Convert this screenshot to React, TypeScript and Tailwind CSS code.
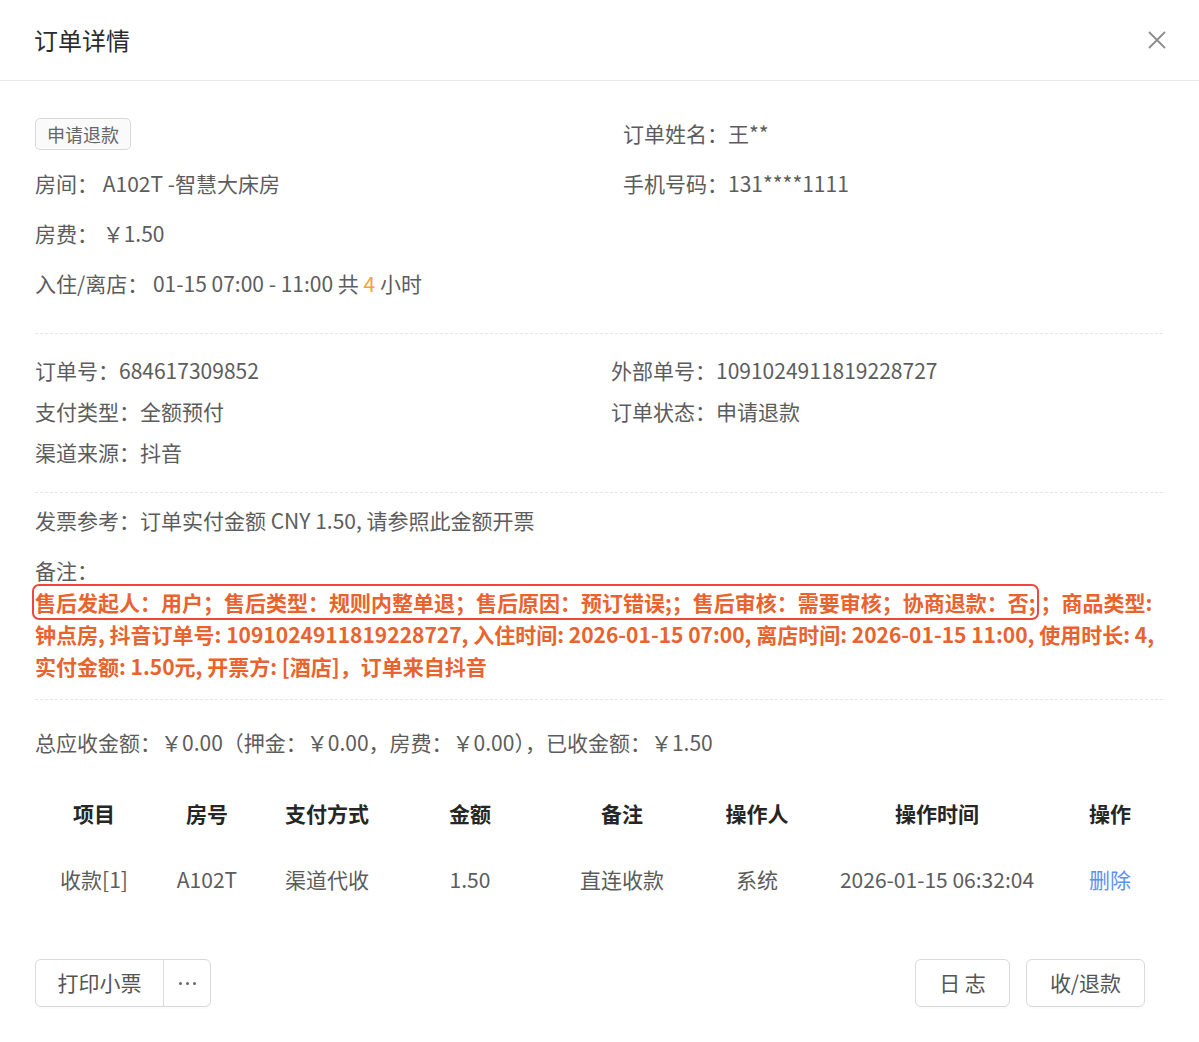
import React from "react"

const font = { fontFamily: '"Noto Sans CJK SC", "Noto Sans", sans-serif' }

const columns = [
  { key: "item", title: "项目" },
  { key: "room", title: "房号" },
  { key: "pay", title: "支付方式" },
  { key: "amount", title: "金额" },
  { key: "note", title: "备注" },
  { key: "operator", title: "操作人" },
  { key: "time", title: "操作时间" },
  { key: "action", title: "操作" },
]

const rows = [
  {
    item: "收款[1]",
    room: "A102T",
    pay: "渠道代收",
    amount: "1.50",
    note: "直连收款",
    operator: "系统",
    time: "2026-01-15 06:32:04",
  },
]

function Divider() {
  return <div className="h-0 border-t border-dashed border-[#e6e6e6]" />
}

function CloseIcon() {
  return (
    <svg width="20" height="20" viewBox="0 0 20 20" fill="none" stroke="#8c8c8c" strokeWidth="1.8">
      <path d="M2 2L18 18M18 2L2 18" />
    </svg>
  )
}

function MoreDots() {
  return (
    <span className="flex items-center gap-[4px]">
      <span className="h-[3px] w-[3px] rounded-full bg-[#666]" />
      <span className="h-[3px] w-[3px] rounded-full bg-[#666]" />
      <span className="h-[3px] w-[3px] rounded-full bg-[#666]" />
    </span>
  )
}

export default function App() {
  return (
    <div className="min-h-[1042px] w-[1199px] bg-white text-[21px] text-[#5c5c5c]" style={font}>
      {/* header */}
      <div className="flex h-[81px] items-center justify-between border-b border-[#e8e8e8] pl-[34px] pr-[26px]">
        <h1 className="text-[24px] leading-none text-[#2b2b2b]">订单详情</h1>
        <button className="flex h-8 w-8 items-center justify-center" aria-label="close">
          <CloseIcon />
        </button>
      </div>

      <div className="px-[36px] pb-[35px] pl-[35px] pt-[28px]">
        {/* room info */}
        <div className="flex">
          <div className="w-[588px]">
            <div className="flex h-[50px] items-center">
              <span className="flex h-[32px] items-center rounded-[5px] border border-[#d9d9d9] bg-[#fafafa] px-[11px] text-[18px] text-[#666]">
                申请退款
              </span>
            </div>
            <div className="flex h-[50px] items-center">房间：&nbsp;A102T -智慧大床房</div>
            <div className="flex h-[50px] items-center">房费：&nbsp;￥1.50</div>
            <div className="flex h-[50px] items-center">
              入住/离店：&nbsp;01-15 07:00 - 11:00 共&nbsp;<span className="text-[#f2a33a]">4</span>&nbsp;小时
            </div>
          </div>
          <div>
            <div className="flex h-[50px] items-center">订单姓名：王**</div>
            <div className="flex h-[50px] items-center">手机号码：131****1111</div>
          </div>
        </div>

        <div className="mt-[24px]">
          <Divider />
        </div>

        {/* order info */}
        <div className="mt-[16px] flex">
          <div className="w-[576px]">
            <div className="flex h-[41px] items-center">订单号：684617309852</div>
            <div className="flex h-[41px] items-center">支付类型：全额预付</div>
            <div className="flex h-[41px] items-center">渠道来源：抖音</div>
          </div>
          <div>
            <div className="flex h-[41px] items-center">外部单号：1091024911819228727</div>
            <div className="flex h-[41px] items-center">订单状态：申请退款</div>
          </div>
        </div>

        <div className="mt-[19px]">
          <Divider />
        </div>

        {/* invoice & remarks */}
        <div className="mt-[11px] leading-[32px]">
          <div>发票参考：订单实付金额 CNY 1.50, 请参照此金额开票</div>
          <div className="mt-[18px]">备注：</div>
          <p className="font-bold leading-[32px] text-[#e9632f]">
            <span className="rounded-[4px] outline-2 outline-offset-[1px] outline-[#f0463c]">
              售后发起人：用户；售后类型：规则内整单退；售后原因：预订错误;；售后审核：需要审核；协商退款：否;
            </span>
            &nbsp;；商品类型: 钟点房, 抖音订单号: 1091024911819228727, 入住时间: 2026-01-15 07:00, 离店时间: 2026-01-15
            11:00, 使用时长: 4, 实付金额: 1.50元, 开票方: [酒店]，订单来自抖音
          </p>
        </div>

        <div className="mt-[17px]">
          <Divider />
        </div>

        <div className="mt-[26px] leading-[32px]">总应收金额：￥0.00（押金：￥0.00，房费：￥0.00），已收金额：￥1.50</div>

        {/* payment records */}
        <div className="mt-[24px]">
          <div className="grid h-[64px] grid-cols-[118px_108px_132px_154px_150px_120px_240px_106px] items-center text-center font-bold text-[#262626]">
            {columns.map((c) => (
              <div key={c.key}>{c.title}</div>
            ))}
          </div>
          {rows.map((r, i) => (
            <div
              key={i}
              className="grid h-[68px] grid-cols-[118px_108px_132px_154px_150px_120px_240px_106px] items-center text-center"
            >
              <div>{r.item}</div>
              <div>{r.room}</div>
              <div>{r.pay}</div>
              <div>{r.amount}</div>
              <div>{r.note}</div>
              <div>{r.operator}</div>
              <div>{r.time}</div>
              <div>
                <a className="cursor-pointer text-[#5b8ff9]">删除</a>
              </div>
            </div>
          ))}
        </div>

        {/* footer actions */}
        <div className="mt-[45px] flex items-center justify-between pr-[18px]">
          <div className="flex h-[48px] rounded-[6px] border border-[#d9d9d9] shadow-[0_2px_0_rgba(0,0,0,0.02)]">
            <button className="w-[128px] border-r border-[#d9d9d9] text-[#555]">打印小票</button>
            <button className="flex w-[46px] items-center justify-center" aria-label="more">
              <MoreDots />
            </button>
          </div>
          <div className="flex gap-[16px]">
            <button className="h-[48px] w-[95px] rounded-[6px] border border-[#d9d9d9] text-[#555] shadow-[0_2px_0_rgba(0,0,0,0.02)]">
              日 志
            </button>
            <button className="h-[48px] w-[119px] rounded-[6px] border border-[#d9d9d9] text-[#555] shadow-[0_2px_0_rgba(0,0,0,0.02)]">
              收/退款
            </button>
          </div>
        </div>
      </div>
    </div>
  )
}
